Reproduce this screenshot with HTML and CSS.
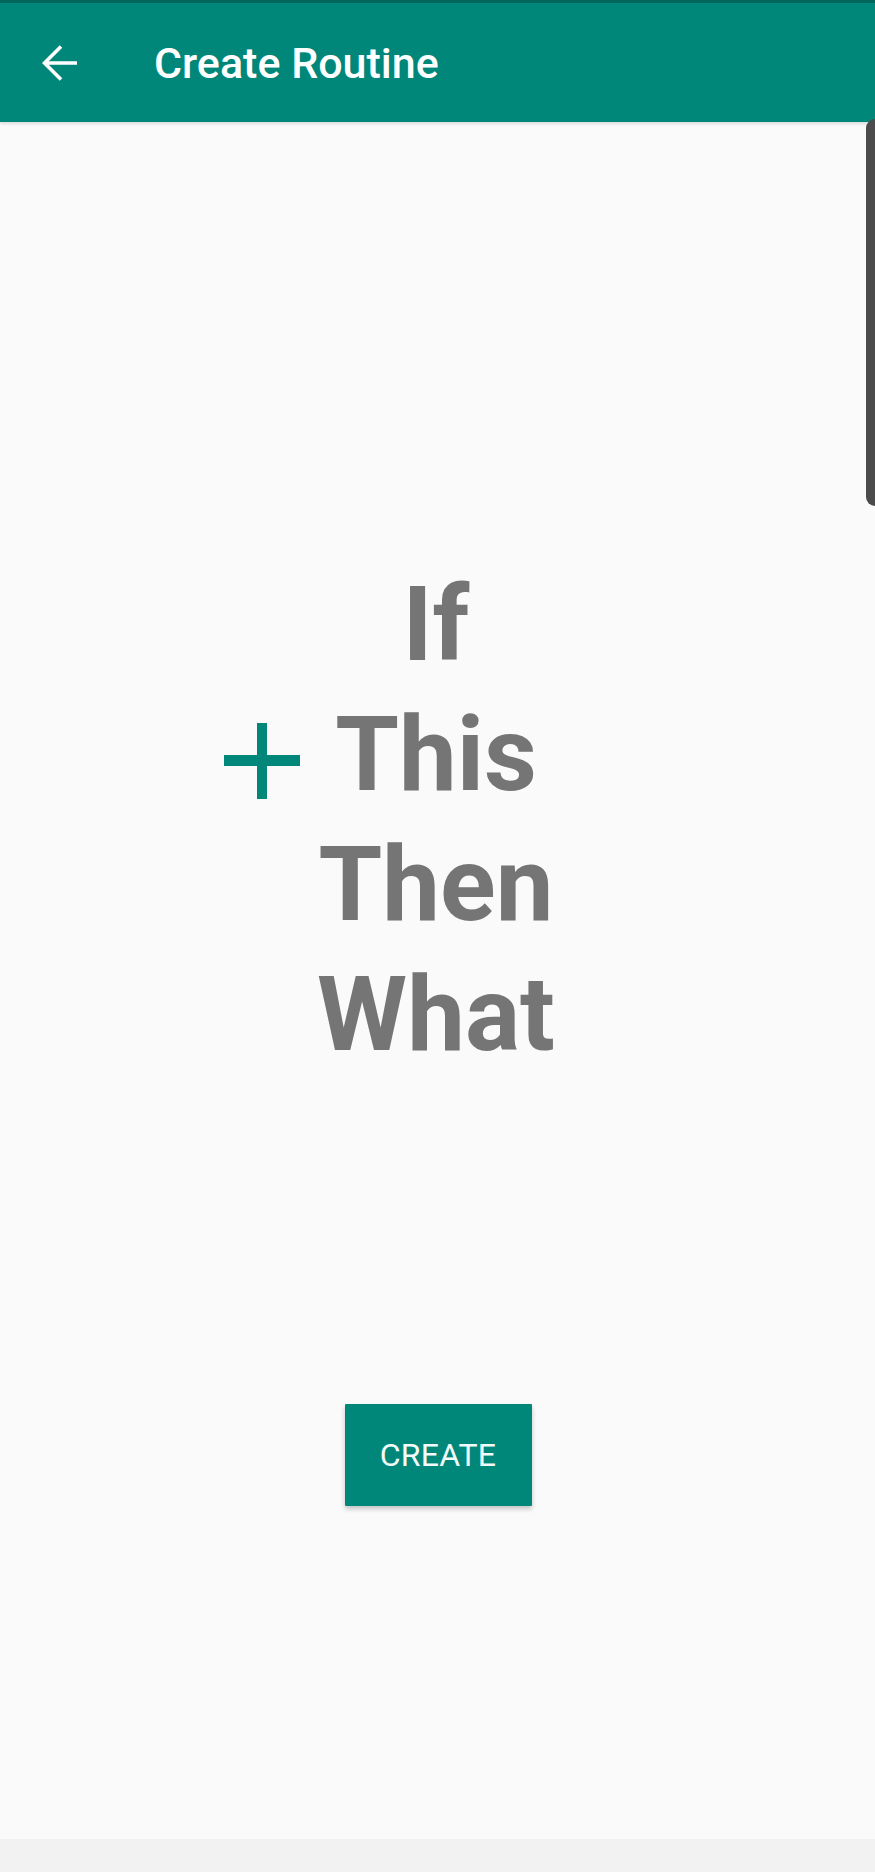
FILE: index.html
```html
<!DOCTYPE html>
<html lang="en">
<head>
<meta charset="utf-8">
<title>Create Routine</title>
<link rel="stylesheet" href="styles.css">
</head>
<body>
<div class="screen">
  <div class="status-line"></div>
  <header class="app-bar">
    <svg class="back" viewBox="0 0 36 36" width="36" height="36" aria-hidden="true">
      <path d="M2.5 18 H35 M19 1.5 L2.5 18 L19 34.5" fill="none" stroke="#ffffff" stroke-width="3.6" stroke-linecap="butt" stroke-linejoin="miter"/>
    </svg>
    <h1 class="title">Create Routine</h1>
  </header>
  <main class="content">
    <div class="phrase-row">
      <div class="plus" aria-hidden="true">
        <span class="plus-h"></span>
        <span class="plus-v"></span>
      </div>
      <div class="phrase">If<br>This<br>Then<br>What</div>
    </div>
    <div class="actions">
      <button class="create-btn">CREATE</button>
    </div>
    <div class="scrollbar"></div>
  </main>
  <div class="nav-strip"></div>
</div>
</body>
</html>
```

FILE: styles.css
```css
html, body {
  margin: 0;
  padding: 0;
}

body {
  background: #fafafa;
  font-family: Roboto, "Noto Sans", "Liberation Sans", sans-serif;
}

.screen {
  width: 875px;
  height: 1872px;
  display: flex;
  flex-direction: column;
  overflow: hidden;
}

.status-line {
  height: 3px;
  background: #00665b;
  flex: none;
}

.app-bar {
  flex: none;
  height: 119px;
  background: #00877a;
  display: flex;
  align-items: center;
  padding-left: 42px;
  box-shadow: 0 2px 3px rgba(0, 0, 0, 0.12);
  position: relative;
  z-index: 1;
}

.back {
  display: block;
  flex: none;
}

.title {
  margin: 0 0 0 76px;
  color: #ffffff;
  font-size: 43px;
  font-weight: 500;
  line-height: 50px;
  letter-spacing: 0;
}

.content {
  flex: 1;
  position: relative;
  background: #fafafa;
  display: flex;
  flex-direction: column;
  align-items: stretch;
}

.phrase-row {
  margin-top: 438px;
  display: grid;
  grid-template-columns: 1fr auto 1fr;
  margin-right: 3px;
}

.plus {
  grid-column: 1;
  justify-self: end;
  align-self: start;
  margin-top: 163px;
  margin-right: 17px;
  width: 76px;
  height: 76px;
  position: relative;
}

.plus-h {
  position: absolute;
  left: 0;
  top: 32px;
  width: 76px;
  height: 11px;
  background: #00877a;
}

.plus-v {
  position: absolute;
  left: 33px;
  top: 0;
  width: 10px;
  height: 76px;
  background: #00877a;
}

.phrase {
  grid-column: 2;
  color: #757575;
  font-size: 103px;
  font-weight: 700;
  line-height: 130px;
  text-align: center;
}

.actions {
  margin-top: 324px;
  display: flex;
  justify-content: center;
}

.create-btn {
  width: 187px;
  height: 102px;
  margin-left: 1px;
  border: none;
  border-radius: 1px;
  background: #00877a;
  color: #f2fbf9;
  font-family: Roboto, "Noto Sans", "Liberation Sans", sans-serif;
  font-size: 32px;
  font-weight: 400;
  letter-spacing: 0.3px;
  box-shadow: 0 3px 5px rgba(0, 0, 0, 0.22);
  padding: 0;
}

.scrollbar {
  position: absolute;
  right: 0;
  top: -3px;
  width: 9px;
  height: 387px;
  background: #4b4b4b;
  border-radius: 9px 0 0 9px;
  z-index: 2;
}

.nav-strip {
  flex: none;
  height: 33px;
  background: #f2f2f2;
}
```
